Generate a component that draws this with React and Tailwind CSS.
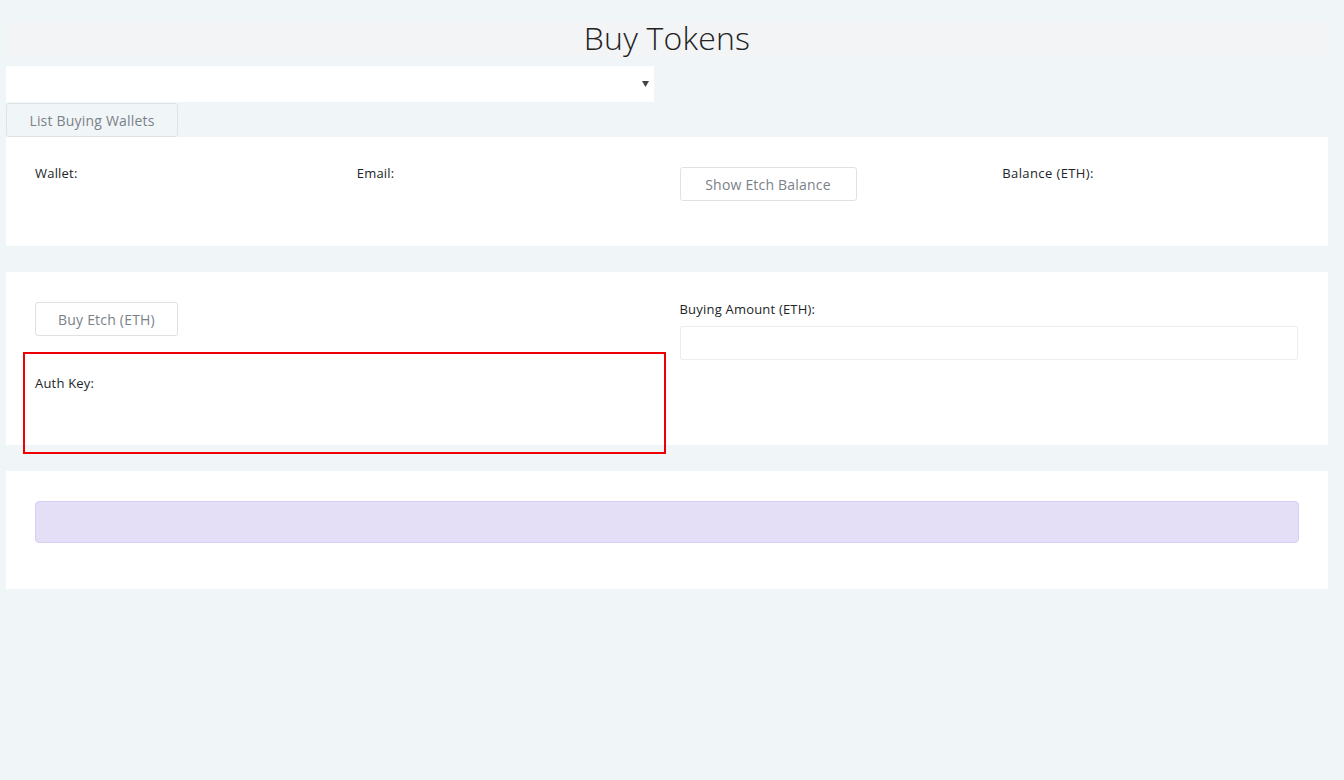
export default function App() {
  return (
    <div className="min-h-screen bg-[#f0f5f8] font-['Open_Sans',sans-serif] text-[#212529]">
      <div className="pt-[22px] pl-[6px] pr-[16px]">
        {/* title */}
        <div className="-mx-[2px] h-[35px] bg-[#f2f4f6] flex items-center justify-center">
          <h1 className="-mt-[4px] text-[32px] font-light text-[#222] leading-none tracking-[0.2px]">Buy Tokens</h1>
        </div>

        {/* wallet select */}
        <div className="mt-[9px] w-[648px] h-[36px] bg-white flex items-center justify-end pr-[5px]">
          <svg width="7" height="6" viewBox="0 0 7 6" className="text-[#444]">
            <path d="M0 0h7L3.5 6z" fill="currentColor" />
          </svg>
        </div>
        <button className="mt-[1px] w-[172px] h-[34px] bg-[#f0f5f8] border border-[#dde2e6] rounded-[3px] text-[14px] text-[#7b8188] tracking-[0.2px]">
          List Buying Wallets
        </button>

        {/* wallet info */}
        <div className="bg-white h-[109px] pt-[27px] pl-[17px] pr-[18px] grid grid-cols-4">
          <div className="px-[12px] text-[13px] leading-[18px] tracking-[0.2px]">Wallet:</div>
          <div className="px-[12px] text-[13px] leading-[18px] tracking-[0.2px]">Email:</div>
          <div className="px-[13px]">
            <button className="mt-[3px] w-[177px] h-[34px] bg-white border border-[#dde2e6] rounded-[3px] text-[14px] text-[#7b8188] tracking-[0.2px]">
              Show Etch Balance
            </button>
          </div>
          <div className="pl-[14px] pr-[10px] text-[13px] leading-[18px] tracking-[0.4px]">Balance (ETH):</div>
        </div>

        {/* buy */}
        <div className="mt-[26px] bg-white h-[173px] pt-[30px] pl-[17px] pr-[18px] grid grid-cols-2 items-start">
          <div className="pr-[1px]">
            <div className="px-[12px]">
              <button className="w-[143px] h-[34px] bg-white border border-[#dde2e6] rounded-[3px] text-[14px] text-[#7b8188] tracking-[0.2px]">
                Buy Etch (ETH)
              </button>
            </div>
            <div className="mt-[16px] h-[102px] border-2 border-[#ee0000] px-[10px] pt-[20px]">
              <div className="text-[13px] leading-[18px] tracking-[0.2px]">Auth Key:</div>
            </div>
          </div>
          <div className="pl-[13px] pr-[12px]">
            <div className="text-[13px] leading-[18px] -mt-[2px] tracking-[0.2px]">Buying Amount (ETH):</div>
            <div className="mt-[8px] h-[34px] bg-white border border-[#ebedf0] rounded-[2px]" />
          </div>
        </div>

        {/* status */}
        <div className="mt-[26px] bg-white pt-[30px] pb-[46px] pl-[29px] pr-[29px]">
          <div className="h-[42px] bg-[#e4dff7] border border-[#d8cdf4] rounded-[4px]" />
        </div>
      </div>
    </div>
  );
}
